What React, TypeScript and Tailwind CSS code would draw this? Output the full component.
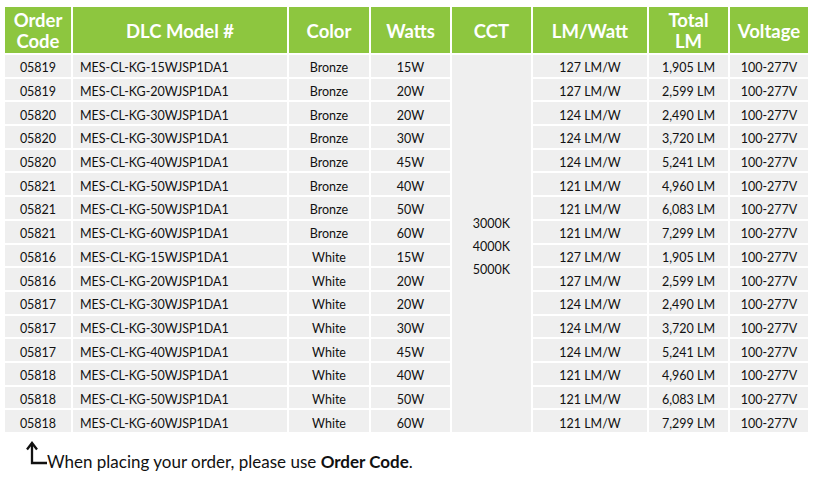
const rows = [
  ["05819", "MES-CL-KG-15WJSP1DA1", "Bronze", "15W", "127 LM/W", "1,905 LM"],
  ["05819", "MES-CL-KG-20WJSP1DA1", "Bronze", "20W", "127 LM/W", "2,599 LM"],
  ["05820", "MES-CL-KG-30WJSP1DA1", "Bronze", "20W", "124 LM/W", "2,490 LM"],
  ["05820", "MES-CL-KG-30WJSP1DA1", "Bronze", "30W", "124 LM/W", "3,720 LM"],
  ["05820", "MES-CL-KG-40WJSP1DA1", "Bronze", "45W", "124 LM/W", "5,241 LM"],
  ["05821", "MES-CL-KG-50WJSP1DA1", "Bronze", "40W", "121 LM/W", "4,960 LM"],
  ["05821", "MES-CL-KG-50WJSP1DA1", "Bronze", "50W", "121 LM/W", "6,083 LM"],
  ["05821", "MES-CL-KG-60WJSP1DA1", "Bronze", "60W", "121 LM/W", "7,299 LM"],
  ["05816", "MES-CL-KG-15WJSP1DA1", "White", "15W", "127 LM/W", "1,905 LM"],
  ["05816", "MES-CL-KG-20WJSP1DA1", "White", "20W", "127 LM/W", "2,599 LM"],
  ["05817", "MES-CL-KG-30WJSP1DA1", "White", "20W", "124 LM/W", "2,490 LM"],
  ["05817", "MES-CL-KG-30WJSP1DA1", "White", "30W", "124 LM/W", "3,720 LM"],
  ["05817", "MES-CL-KG-40WJSP1DA1", "White", "45W", "124 LM/W", "5,241 LM"],
  ["05818", "MES-CL-KG-50WJSP1DA1", "White", "40W", "121 LM/W", "4,960 LM"],
  ["05818", "MES-CL-KG-50WJSP1DA1", "White", "50W", "121 LM/W", "6,083 LM"],
  ["05818", "MES-CL-KG-60WJSP1DA1", "White", "60W", "121 LM/W", "7,299 LM"],
];

const cell = "bg-[#efefef] flex items-center justify-center pt-[5px] leading-[16px]";
const head = "bg-[#8dc63f] text-white font-bold text-[18.5px] leading-[21px] flex items-center justify-center text-center pt-[2px]";

export default function App() {
  return (
    <div className="w-[815px] h-[480px] bg-white text-[#111] font-['Lato',sans-serif] pt-[7px] pl-[5px]">
      <div className="grid grid-cols-[66px_214px_80px_79px_79px_114px_79px_78px] grid-rows-[46px_repeat(16,21.7px)] gap-[2px] text-[12.5px]">
        {/* header */}
        <div className={head}>
          Order<br />Code
        </div>
        {["DLC Model #", "Color", "Watts", "CCT", "LM/Watt"].map((h) => (
          <div key={h} className={head}>
            {h}
          </div>
        ))}
        <div className={head}>
          Total<br />LM
        </div>
        <div className={head}>Voltage</div>

        {rows.map((r, i) => (
          <>
            <div key={`a${i}`} className={cell}>{r[0]}</div>
            <div key={`b${i}`} className="bg-[#efefef] flex items-center pl-[7px] pt-[5px] leading-[16px]">{r[1]}</div>
            <div key={`c${i}`} className={cell}>{r[2]}</div>
            <div key={`d${i}`} className={cell}>{r[3]}</div>
            {i === 0 && (
              <div className="bg-[#efefef] row-span-16 flex flex-col items-center justify-center gap-[6px] leading-[17px] pt-[5px]">
                <span>3000K</span>
                <span>4000K</span>
                <span>5000K</span>
              </div>
            )}
            <div key={`e${i}`} className={cell}>{r[4]}</div>
            <div key={`f${i}`} className={cell}>{r[5]}</div>
            <div key={`g${i}`} className={cell}>100-277V</div>
          </>
        ))}
      </div>

      {/* order code hint */}
      <div className="flex items-start mt-[9px] ml-[21px]">
        <svg width="22" height="24" viewBox="0 0 22 24" className="shrink-0">
          <path d="M6 3 V22 H21" fill="none" stroke="#111" strokeWidth="2.3" />
          <path d="M1 8.5 L6 2 L11 8.5" fill="none" stroke="#111" strokeWidth="2.3" />
        </svg>
        <span className="text-[17px] leading-[20px] mt-[11px] -ml-[1px] text-[#111]">
          When placing your order, please use <b>Order Code</b>.
        </span>
      </div>
    </div>
  );
}
